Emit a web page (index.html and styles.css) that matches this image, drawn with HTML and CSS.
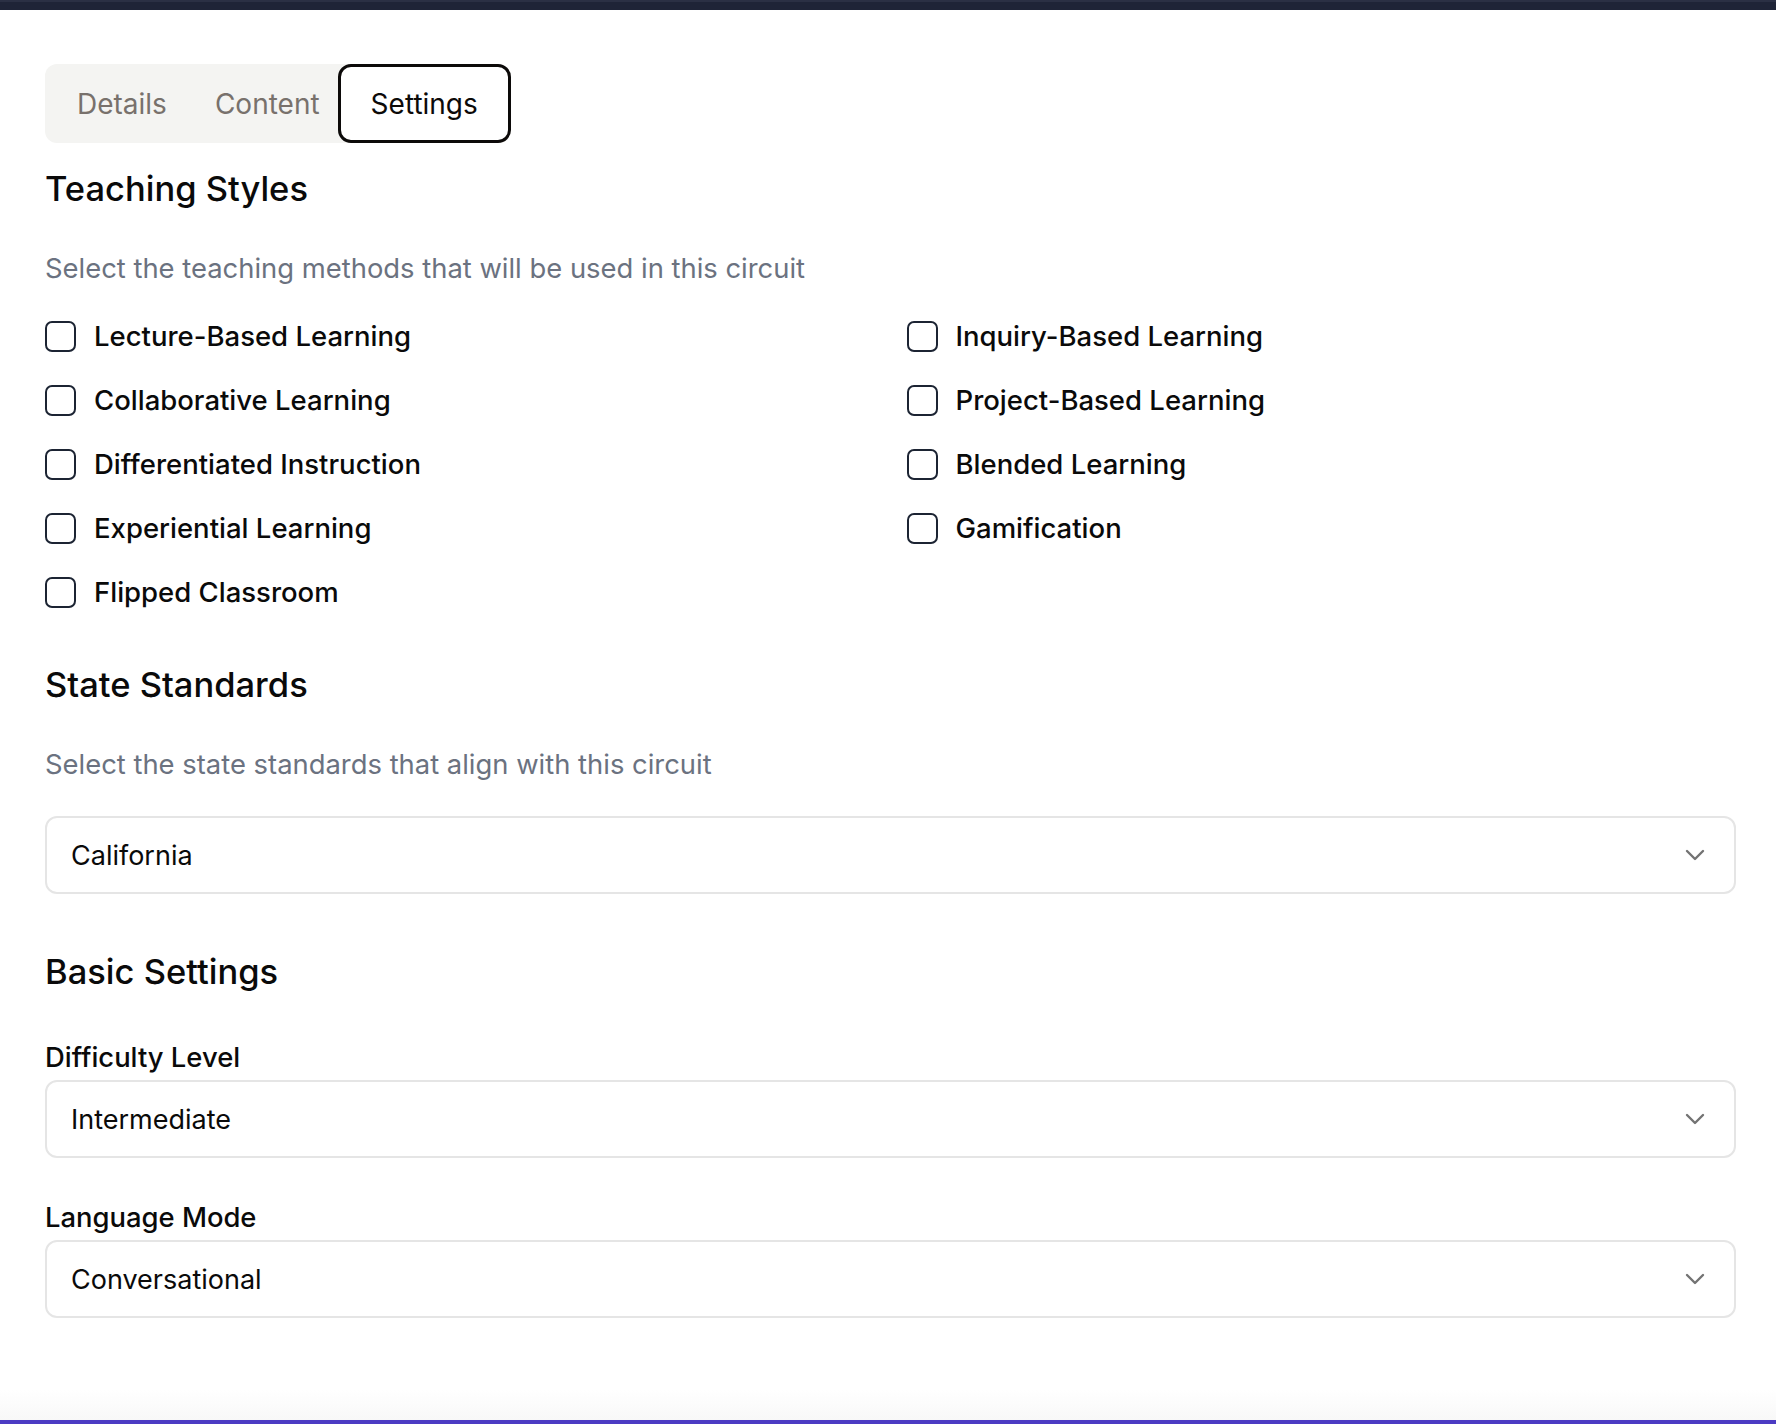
FILE: index.html
```html
<!DOCTYPE html>
<html lang="en">
<head>
<meta charset="utf-8">
<title>Circuit Settings</title>
<link rel="stylesheet" href="styles.css">
</head>
<body>
<div class="topbar"></div>
<main class="page">
  <div class="tabs">
    <button class="tab">Details</button>
    <button class="tab">Content</button>
    <button class="tab tab-active">Settings</button>
  </div>

  <h2 class="section-title first">Teaching Styles</h2>
  <p class="section-desc">Select the teaching methods that will be used in this circuit</p>
  <div class="check-grid">
    <label class="check"><span class="box"></span>Lecture-Based Learning</label>
    <label class="check"><span class="box"></span>Inquiry-Based Learning</label>
    <label class="check"><span class="box"></span>Collaborative Learning</label>
    <label class="check"><span class="box"></span>Project-Based Learning</label>
    <label class="check"><span class="box"></span>Differentiated Instruction</label>
    <label class="check"><span class="box"></span>Blended Learning</label>
    <label class="check"><span class="box"></span>Experiential Learning</label>
    <label class="check"><span class="box"></span>Gamification</label>
    <label class="check"><span class="box"></span>Flipped Classroom</label>
  </div>

  <h2 class="section-title standards">State Standards</h2>
  <p class="section-desc">Select the state standards that align with this circuit</p>
  <div class="select select-state">
    <span>California</span>
    <svg class="chev" viewBox="0 0 20 12" width="20" height="12"><path d="M2 2 L10 10 L18 2" fill="none" stroke="#737373" stroke-width="2.4" stroke-linecap="round" stroke-linejoin="round"/></svg>
  </div>

  <h2 class="section-title basic">Basic Settings</h2>
  <div class="field field-first">
    <div class="field-label">Difficulty Level</div>
    <div class="select">
      <span>Intermediate</span>
      <svg class="chev" viewBox="0 0 20 12" width="20" height="12"><path d="M2 2 L10 10 L18 2" fill="none" stroke="#737373" stroke-width="2.4" stroke-linecap="round" stroke-linejoin="round"/></svg>
    </div>
  </div>
  <div class="field">
    <div class="field-label">Language Mode</div>
    <div class="select">
      <span>Conversational</span>
      <svg class="chev" viewBox="0 0 20 12" width="20" height="12"><path d="M2 2 L10 10 L18 2" fill="none" stroke="#737373" stroke-width="2.4" stroke-linecap="round" stroke-linejoin="round"/></svg>
    </div>
  </div>
</main>
<div class="fade"></div>
<div class="bottombar"></div>
</body>
</html>
```
FILE: styles.css
```css
* { box-sizing: border-box; }

html, body {
  margin: 0;
  padding: 0;
}

body {
  min-height: 100vh;
  display: flex;
  flex-direction: column;
  background: #ffffff;
  font-family: Inter, "Noto Sans", "Liberation Sans", sans-serif;
  color: #0a0a0a;
}

.topbar {
  height: 10px;
  background: #1f2437;
  border-top: 2px solid #2b3044;
  flex: none;
}

.page {
  flex: 1;
  padding: 54px 40px 0 45px;
}

.tabs {
  display: inline-flex;
  align-items: stretch;
  height: 79px;
  background: #f4f4f2;
  border-radius: 12px;
}

.tab {
  font-family: inherit;
  font-size: 28px;
  font-weight: 400;
  color: #78716c;
  background: transparent;
  border: 0;
  padding: 0 24px;
  margin: 0;
  cursor: pointer;
}

.tab:first-child {
  padding-left: 32px;
}

.tab-active {
  color: #0c0a09;
  background: #ffffff;
  border: 3.5px solid #0c0a09;
  border-radius: 13px;
  padding: 0 30px;
  margin-left: -6px;
}

.section-title {
  margin: 0;
  font-size: 34.5px;
  line-height: 40px;
  font-weight: 500;
  color: #0a0a0a;
}

.section-title.first { margin-top: 26px; }
.section-title.standards { margin-top: 53px; }
.section-title.basic { margin-top: 58px; }

.section-desc {
  margin: 41px 0 0;
  font-size: 27.4px;
  line-height: 36px;
  color: #6b7280;
}

.check-grid {
  margin-top: 30px;
  display: grid;
  grid-template-columns: 1fr 1fr;
  column-gap: 32px;
  row-gap: 24px;
}

.check {
  display: flex;
  align-items: center;
  height: 40px;
  font-size: 27.5px;
  font-weight: 500;
  color: #0a0a0a;
}

.box {
  width: 31px;
  height: 31px;
  border: 2.5px solid #1c2433;
  border-radius: 7px;
  margin-right: 18px;
  flex: none;
}

.select {
  display: flex;
  align-items: center;
  justify-content: space-between;
  height: 78px;
  border: 2px solid #e5e5e5;
  border-radius: 12px;
  padding: 0 29px 0 24px;
  font-size: 27px;
  color: #0a0a0a;
}

.select-state {
  margin-top: 34px;
}

.chev {
  display: block;
  flex: none;
}

.field { margin-top: 41px; }
.field.field-first { margin-top: 47px; }

.field-label {
  font-size: 27.4px;
  font-weight: 500;
  line-height: 36px;
  margin-bottom: 5px;
}

.fade {
  height: 30px;
  flex: none;
  background: linear-gradient(#ffffff, #f8f8f8);
}

.bottombar {
  height: 4px;
  flex: none;
  background: #4c3bc3;
}
```
